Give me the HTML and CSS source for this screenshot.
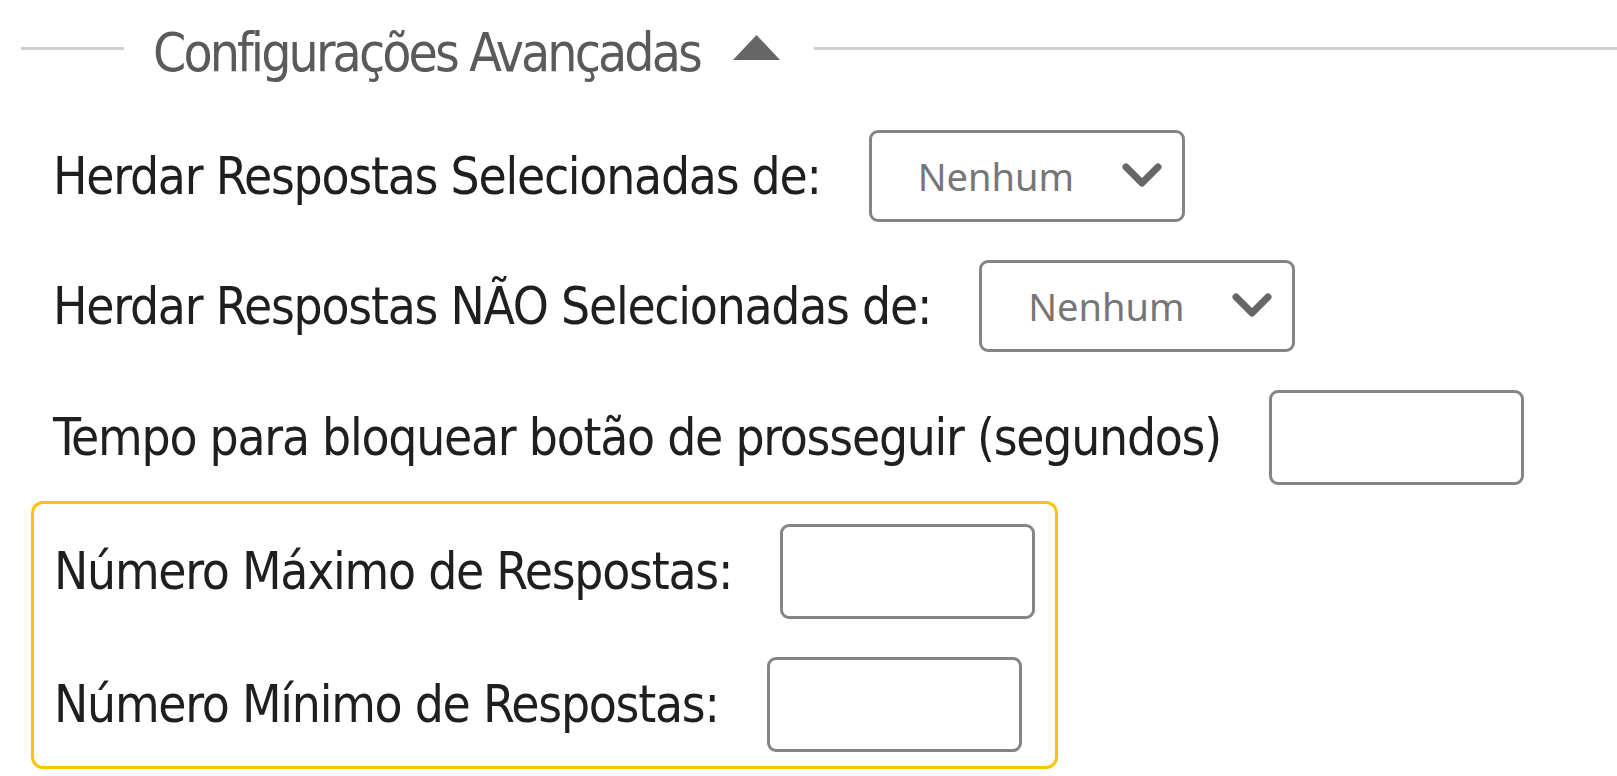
FILE: index.html
```html
<!DOCTYPE html>
<html lang="pt-BR">
<head>
<meta charset="utf-8">
<title>Configurações Avançadas</title>
<link rel="stylesheet" href="styles.css">
</head>
<body>
<div class="panel">
  <div class="section-head">
    <span class="rule rule-left"></span>
    <span class="title">Configurações Avançadas</span>
    <svg class="caret" width="47" height="25" viewBox="0 0 47 25"><polygon points="23.5,0 47,25 0,25" fill="#666666"/></svg>
    <span class="rule rule-right"></span>
  </div>
  <div class="fields">
    <div class="row">
      <label class="label">Herdar Respostas Selecionadas de:</label>
      <div class="select">
        <span class="select-text">Nenhum</span>
        <svg class="chevron" width="40" height="26" viewBox="0 0 40 26"><polyline points="4,4 20,20 36,4" fill="none" stroke="#666666" stroke-width="7" stroke-linecap="round" stroke-linejoin="round"/></svg>
      </div>
    </div>
    <div class="row">
      <label class="label">Herdar Respostas NÃO Selecionadas de:</label>
      <div class="select">
        <span class="select-text">Nenhum</span>
        <svg class="chevron" width="40" height="26" viewBox="0 0 40 26"><polyline points="4,4 20,20 36,4" fill="none" stroke="#666666" stroke-width="7" stroke-linecap="round" stroke-linejoin="round"/></svg>
      </div>
    </div>
    <div class="row row-tall">
      <label class="label">Tempo para bloquear botão de prosseguir (segundos)</label>
      <div class="textbox"></div>
    </div>
    <div class="highlight">
      <div class="row row-tall">
        <label class="label">Número Máximo de Respostas:</label>
        <div class="textbox"></div>
      </div>
      <div class="row row-tall">
        <label class="label">Número Mínimo de Respostas:</label>
        <div class="textbox"></div>
      </div>
    </div>
  </div>
</div>
</body>
</html>
```

FILE: styles.css
```css
* { box-sizing: border-box; }
html, body { margin: 0; padding: 0; background: #ffffff; }
body {
  width: 1617px;
  height: 776px;
  overflow: hidden;
  font-family: "DejaVu Sans Condensed", "DejaVu Sans", sans-serif;
}
.panel { width: 1617px; }
.section-head {
  height: 96px;
  display: flex;
  align-items: center;
}
.rule { height: 3px; background: #cfcfcf; }
.rule-left { width: 103px; margin-left: 21px; }
.rule-right { flex: 1; }
.title {
  margin-left: 29px;
  font-family: "DejaVu Sans Condensed", "DejaVu Sans", sans-serif;
  font-size: 53px;
  letter-spacing: -2.9px;
  color: #5a5a5a;
  line-height: 1;
  padding-top: 8px;
}
.caret { margin-left: 33px; margin-right: 34px; margin-top: -2px; }
.fields {
  padding-top: 34px;
  display: flex;
  flex-direction: column;
  align-items: flex-start;
  gap: 38px;
}
.row {
  display: flex;
  align-items: center;
  height: 92px;
  gap: 48px;
  padding-left: 53px;
}
.row-tall { height: 95px; }
.label {
  font-size: 51px;
  letter-spacing: -1.25px;
  color: #1f1f1f;
  white-space: nowrap;
}
.select {
  width: 316px;
  height: 92px;
  border: 3px solid #858585;
  border-radius: 9px;
  display: flex;
  align-items: center;
  justify-content: space-between;
  padding-left: 46px;
  padding-right: 20px;
}
.select-text {
  font-family: "Noto Sans", "DejaVu Sans", sans-serif;
  font-size: 38px;
  color: #767676;
}
.textbox {
  width: 255px;
  height: 95px;
  border: 3px solid #858585;
  border-radius: 9px;
}
.highlight {
  margin-top: -22px;
  margin-left: 31px;
  border: 3px solid #ffc400;
  border-radius: 12px;
  padding: 19px 20px 14px 0;
  display: flex;
  flex-direction: column;
  gap: 38px;
}
.highlight .row { padding-left: 20px; }
.highlight .row:first-child { height: 96px; }
```
